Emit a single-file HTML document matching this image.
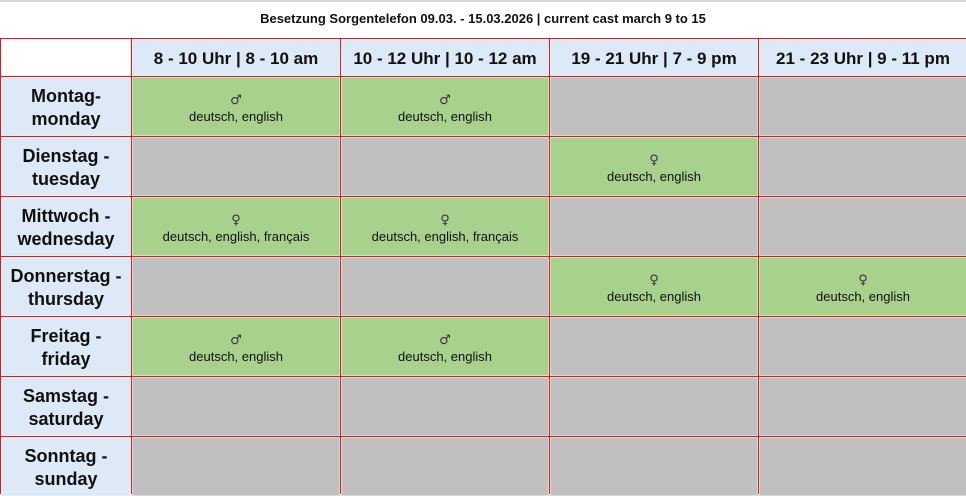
<!DOCTYPE html>
<html><head><meta charset="utf-8"><style>
body{margin:0;width:966px;height:494px;overflow:hidden;background:#fff;font-family:"Liberation Sans",Arial,sans-serif;position:relative}
.top{position:absolute;left:0;top:0;width:966px;height:2px;background:#d8d8d8}
.title{position:absolute;left:0;top:11px;width:966px;text-align:center;font-size:13px;font-weight:bold;color:#111}
.c{position:absolute;box-sizing:border-box;border:1px solid #e8eef4;display:flex;flex-direction:column;align-items:center;justify-content:center;text-align:center;color:#111}
.h{background:#dde9f6;font-weight:bold;font-size:17px;padding-top:3px}
.d{background:#dde9f6;font-weight:bold;font-size:18px;line-height:23px;padding-top:2px}
.g{background:#a9d18e;font-size:13px;line-height:15px;border-color:#c9e6b4;padding-top:3px}
.x{background:#c0c0c0;border-color:#d8d8d8}
.vl{position:absolute;top:38px;width:1px;height:456px;background:#d42020}
.hl{position:absolute;left:0;width:966px;height:1px;background:#d42020}
.s{font-family:"DejaVu Sans",sans-serif;font-size:13px;line-height:16px;color:#333}
</style></head><body>
<div class="top"></div>
<div class="title">Besetzung Sorgentelefon 09.03. - 15.03.2026 | current cast march 9 to 15</div>
<div id="g"></div>
<script>
var xs=[0,131,340,549,758,967],ys=[38,76,136,196,256,316,376,436,496];
var heads=["","8 - 10 Uhr | 8 - 10 am","10 - 12 Uhr | 10 - 12 am","19 - 21 Uhr | 7 - 9 pm","21 - 23 Uhr | 9 - 11 pm"];
var days=["Montag-<br>monday","Dienstag -<br>tuesday","Mittwoch -<br>wednesday","Donnerstag -<br>thursday","Freitag -<br>friday","Samstag -<br>saturday","Sonntag -<br>sunday"];
var M=["♂","deutsch, english"],F=["♀","deutsch, english"],FF=["♀","deutsch, english, français"];
var data=[[M,M,0,0],[0,0,F,0],[FF,FF,0,0],[0,0,F,F],[M,M,0,0],[0,0,0,0],[0,0,0,0]];
var h="";
function cell(cls,x0,x1,y0,y1,inner){h+='<div class="c '+cls+'" style="left:'+(x0+1)+'px;top:'+(y0+1)+'px;width:'+(x1-x0-1)+'px;height:'+(y1-y0-1)+'px">'+inner+'</div>';}
cell("",0,131,38,76,"");
for(var i=1;i<5;i++)cell("h",xs[i],xs[i+1],38,76,heads[i]);
for(var r=0;r<7;r++){
 cell("d",0,131,ys[r+1],ys[r+2],days[r]);
 for(var c=0;c<4;c++){var v=data[r][c];
  if(v)cell("g",xs[c+1],xs[c+2],ys[r+1],ys[r+2],'<span class="s">'+v[0]+'</span><span>'+v[1]+'</span>');
  else cell("x",xs[c+1],xs[c+2],ys[r+1],ys[r+2],"");}
}
for(var i=0;i<5;i++)h+='<div class="vl" style="left:'+xs[i]+'px"></div>';
for(var j=0;j<8;j++)h+='<div class="hl" style="top:'+ys[j]+'px"></div>';
document.getElementById("g").innerHTML=h;
</script>
</body></html>
